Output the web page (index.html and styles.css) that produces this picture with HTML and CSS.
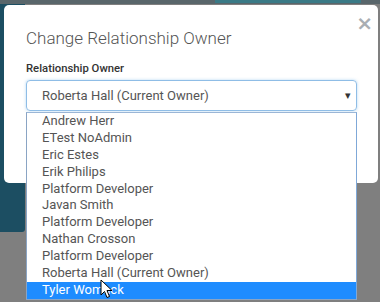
FILE: index.html
```html
<!DOCTYPE html>
<html>
<head>
<meta charset="utf-8">
<link rel="stylesheet" href="styles.css">
</head>
<body>
<div class="page">
  <div class="topbar"><div class="topbar-accent"></div></div>
  <div class="side"></div>
</div>
<div class="modal">
  <button class="close">×</button>
  <h1 class="title">Change Relationship Owner</h1>
  <div class="label">Relationship Owner</div>
  <div class="select">
    <span class="select-value">Roberta Hall (Current Owner)</span>
    <span class="caret">▾</span>
  </div>
</div>
<ul class="options">
  <li>Andrew Herr</li>
  <li>ETest NoAdmin</li>
  <li>Eric Estes</li>
  <li>Erik Philips</li>
  <li>Platform Developer</li>
  <li>Javan Smith</li>
  <li>Platform Developer</li>
  <li>Nathan Crosson</li>
  <li>Platform Developer</li>
  <li>Roberta Hall (Current Owner)</li>
  <li class="active">Tyler Womack</li>
</ul>
<svg class="cursor" width="14" height="20" viewBox="0 0 14 20"><path d="M1 1 L1 16 L4.5 12.5 L7 18.5 L9.5 17.5 L7 11.5 L12 11.5 Z" fill="#fff" stroke="#000" stroke-width="1"/></svg>
</body>
</html>
```
FILE: styles.css
```css
html, body {
  margin: 0;
  padding: 0;
}
body {
  width: 380px;
  height: 302px;
  overflow: hidden;
  background: #7f7f7f;
  font-family: Roboto, "Liberation Sans", sans-serif;
  position: relative;
}
.page {
  display: flex;
  flex-direction: column;
}
.topbar {
  height: 4px;
  background: #59666b;
  display: flex;
  padding-left: 215px;
}
.topbar-accent {
  width: 146px;
  height: 3px;
  background: #3a7a86;
}
.side {
  width: 25px;
  height: 228px;
  background: #1c4e62;
  border-bottom-right-radius: 3px;
}
.modal {
  position: absolute;
  left: 4px;
  top: 5px;
  width: 374px;
  height: 178px;
  background: #fff;
  border-radius: 5px;
  box-sizing: border-box;
  padding: 22px 0 0 22px;
}
.close {
  position: absolute;
  right: 5px;
  top: 8px;
  border: 0;
  background: none;
  padding: 0;
  font-family: "DejaVu Sans", sans-serif;
  font-size: 20px;
  font-weight: bold;
  line-height: 20px;
  color: #a9aeb3;
}
.title {
  margin: 0;
  font-size: 17px;
  font-weight: 300;
  color: #555;
  line-height: 22px;
}
.label {
  margin-top: 13px;
  font-size: 11.3px;
  font-weight: 500;
  color: #333;
  line-height: 14px;
}
.select {
  margin-top: 4px;
  width: 331px;
  height: 31px;
  box-sizing: border-box;
  border: 1px solid #8fbde6;
  border-radius: 4px;
  box-shadow: 0 0 3px rgba(102, 175, 233, 0.5);
  display: flex;
  align-items: center;
  justify-content: space-between;
  padding: 0 5px 0 15px;
  font-size: 13px;
  color: #555;
}
.caret {
  font-size: 11px;
  color: #333;
}
.options {
  position: absolute;
  left: 26px;
  top: 112px;
  width: 331px;
  margin: 0;
  padding: 0;
  list-style: none;
  background: #fff;
  border: 1px solid #8aa4c4;
  border-right-color: #7fa8d8;
  border-top-color: #9bb6d6;
  box-sizing: border-box;
}
.options li {
  height: 16.9px;
  line-height: 16.9px;
  padding-left: 15px;
  font-size: 13px;
  color: #555;
}
.options li.active {
  background: #1e8cff;
  color: #fff;
}
.cursor {
  position: absolute;
  left: 100px;
  top: 279px;
}
```
